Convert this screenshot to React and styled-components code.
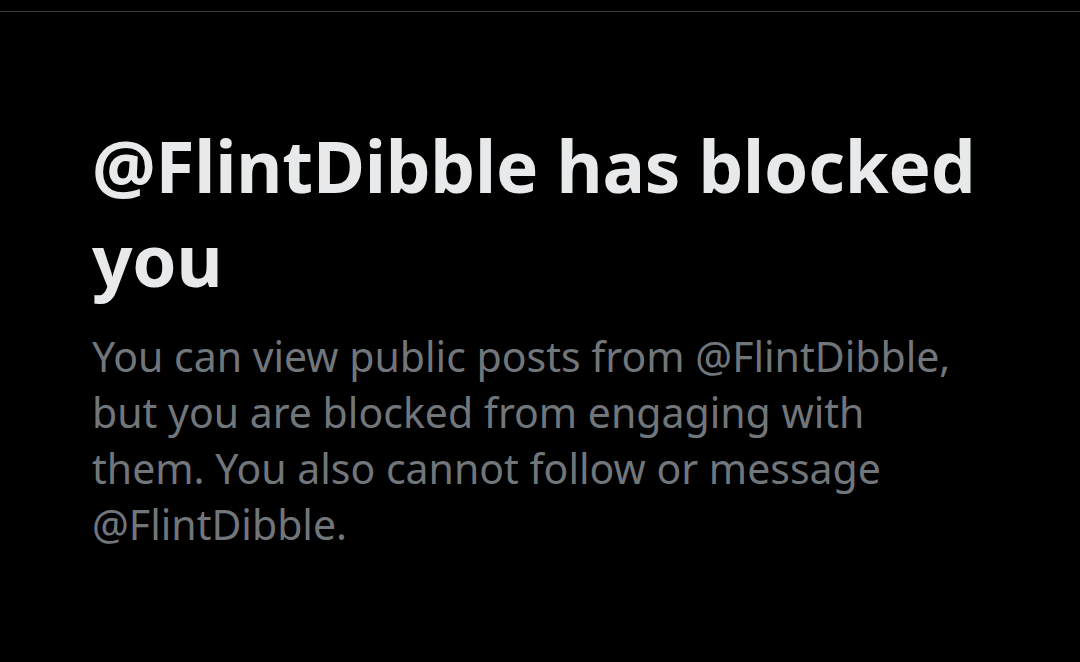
import React from 'react';
import styled, { createGlobalStyle } from 'styled-components';

const GlobalStyle = createGlobalStyle`
  html, body {
    margin: 0;
    padding: 0;
    background: #000;
  }
  body {
    font-family: "Noto Sans", "Open Sans", "DejaVu Sans", sans-serif;
  }
`;

const Page = styled.div`
  width: 1080px;
  height: 662px;
  background: #000;
  overflow: hidden;
`;

const Divider = styled.div`
  margin-top: 11px;
  height: 1px;
  background: #3b3e41;
`;

const Content = styled.section`
  padding: 107px 0 0 92px;
  width: 920px;
`;

const Title = styled.h1`
  margin: 0;
  font-size: 71px;
  line-height: 94px;
  font-weight: 700;
  color: #e7e9ea;
  letter-spacing: -0.2px;
`;

const Message = styled.p`
  margin: 21px 0 0;
  font-size: 41px;
  line-height: 56px;
  font-weight: 400;
  color: #71767b;
  max-width: 890px;
`;

const BlockedNotice = ({ handle }) => (
  <Content>
    <Title>@{handle} has blocked you</Title>
    <Message>
      You can view public posts from @{handle}, but you are blocked from
      engaging with them. You also cannot follow or message @{handle}.
    </Message>
  </Content>
);

const App = () => (
  <Page>
    <GlobalStyle />
    <Divider />
    <BlockedNotice handle="FlintDibble" />
  </Page>
);

export default App;
